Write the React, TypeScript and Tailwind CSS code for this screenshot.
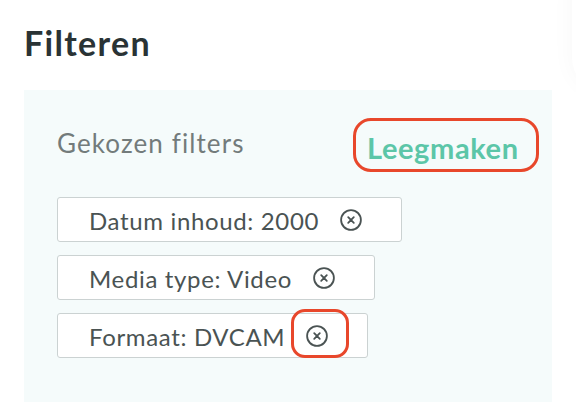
import React from "react";

const filters = [
  { id: "date", label: "Datum inhoud: 2000" },
  { id: "media", label: "Media type: Video" },
  { id: "format", label: "Formaat: DVCAM", highlighted: true },
];

function ClearIcon({ className }: { className?: string }) {
  return (
    <svg viewBox="0 0 22 22" fill="none" className={className} aria-hidden="true">
      <circle cx="11" cy="11" r="9.9" stroke="currentColor" strokeWidth="1.8" />
      <path d="M8.2 8.2l5.6 5.6M13.8 8.2l-5.6 5.6" stroke="currentColor" strokeWidth="1.8" strokeLinecap="round" />
    </svg>
  );
}

function FilterChip({ label, highlighted }: { label: string; highlighted?: boolean }) {
  return (
    <div className="flex h-[45px] w-fit items-center rounded-[3px] border border-[#cbd2d2] bg-white pl-[31px] pr-[39px]">
      <span className="pt-[2px] text-[24px] leading-none tracking-[0.65px] text-[#4a5353]">{label}</span>
      <span className="relative ml-[21px] flex h-[22px] w-[22px] text-[#4a5353]">
        <ClearIcon className="h-[22px] w-[22px]" />
        {highlighted ? (
          <span className="pointer-events-none absolute left-[-15px] top-[-16px] h-[49px] w-[58px] rounded-[14px] border-[3px] border-[#e8472b]" />
        ) : null}
      </span>
    </div>
  );
}

export default function App() {
  return (
    <div
      className="relative h-[412px] w-[576px] overflow-hidden bg-white"
      style={{ fontFamily: "Lato, 'Noto Sans', sans-serif" }}
    >
      <div className="pointer-events-none absolute right-[-60px] top-[-40px] h-[130px] w-[64px] rounded-full shadow-[0_0_24px_rgba(0,0,0,0.035)]" />
      <div className="px-6 pt-[23px]">
        <h1 className="text-[34px] font-bold leading-[40px] tracking-[1.3px] text-[#2a3335]">Filteren</h1>
        <section className="mt-[27px] h-[312px] w-[528px] bg-[#f5fbfb] pl-[33px] pr-[13px] pt-[28px]">
          <header className="flex items-center justify-between">
            <p className="pb-[5px] text-[26px] leading-none tracking-[1.1px] text-[#737b7b]">Gekozen filters</p>
            <button
              type="button"
              className="flex h-[54px] w-[186px] items-center justify-start rounded-[18px] border-[3px] border-[#e8472b] pl-[11px] pt-[5px] text-[29px] font-bold leading-none tracking-[0.6px] text-[#5cc6a8]"
            >
              Leegmaken
            </button>
          </header>
          <div className="mt-[25px] flex flex-col gap-[13px]">
            {filters.map((f) => (
              <FilterChip key={f.id} label={f.label} highlighted={f.highlighted} />
            ))}
          </div>
        </section>
      </div>
    </div>
  );
}
